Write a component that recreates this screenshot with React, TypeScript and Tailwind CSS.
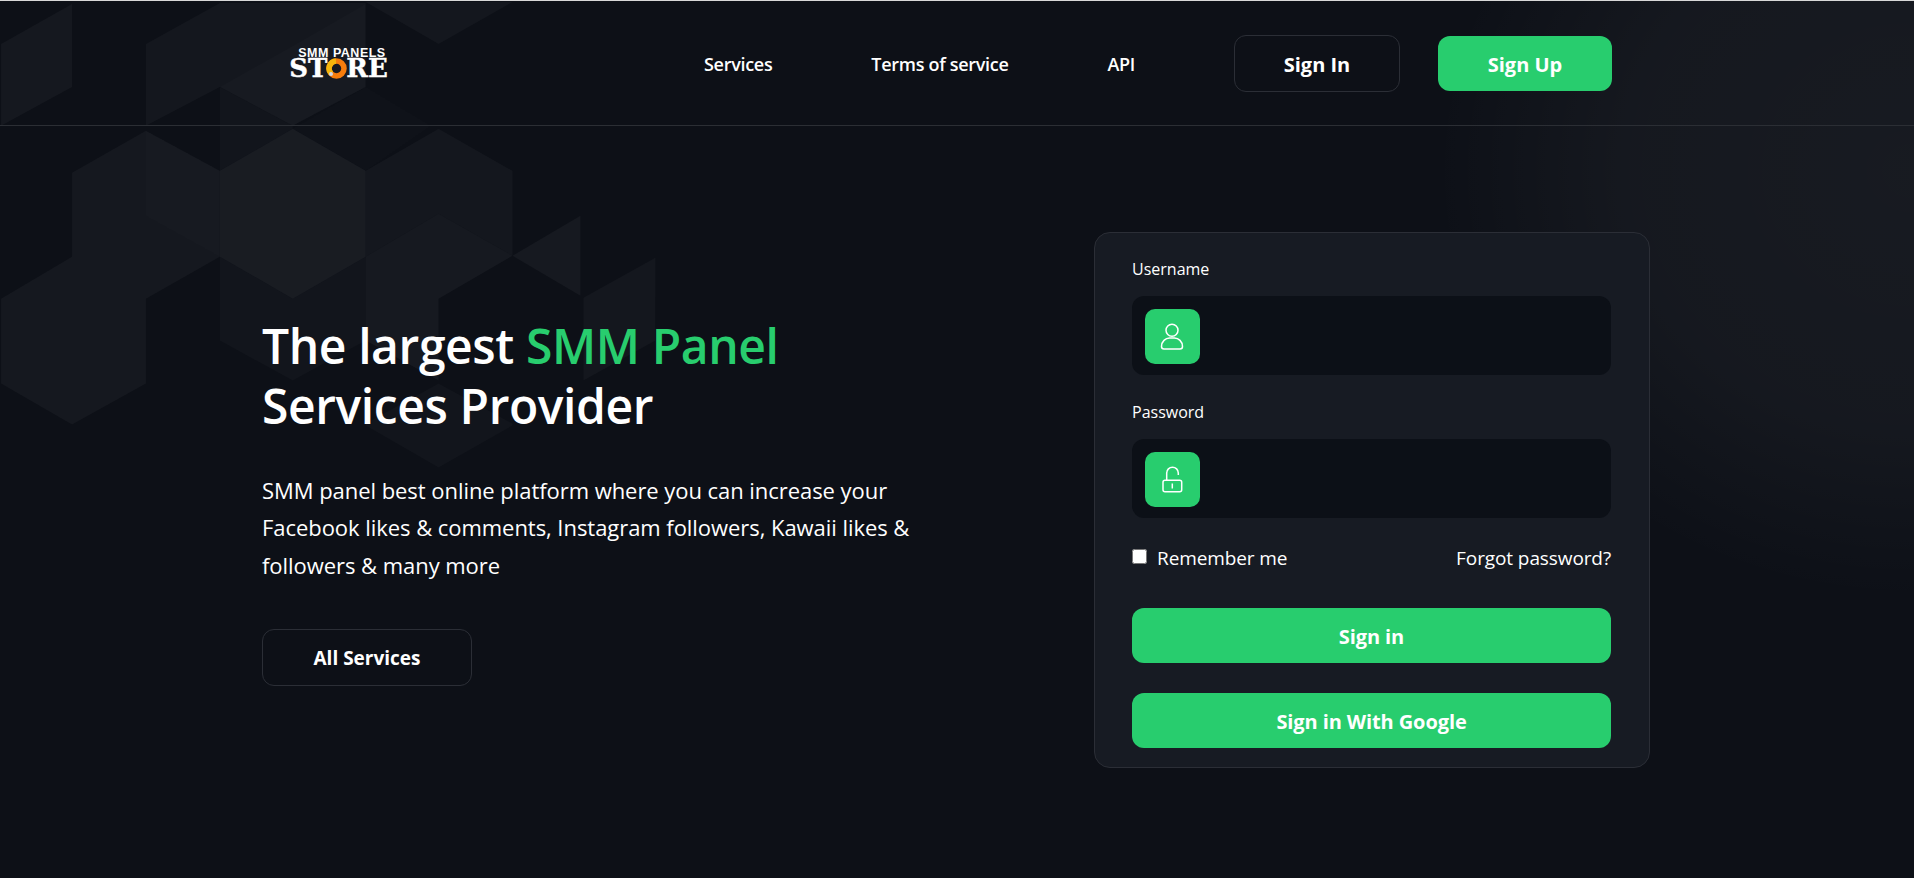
import { useState } from "react";

const shapes: { points: string; opacity: number }[] = [
  { points: "0,43 71,3 71,86 0,125", opacity: 0.035 },
  { points: "145,43 219,2 365,2 365,86 292,125 219,86 145,125", opacity: 0.03 },
  { points: "219,86 292,45 365,3 365,86 292,125", opacity: 0.015 },
  { points: "365,1 438,43 512,1", opacity: 0.03 },
  { points: "219,86 292,125 292,128 219,170", opacity: 0.025 },
  { points: "292,128 365,86 430,125 365,170", opacity: 0.012 },
  { points: "219,170 292,128 365,170 365,256 292,298 219,256", opacity: 0.05 },
  { points: "71,172 145,130 219,170 219,256 145,298 145,383 71,424 0,383 0,298 71,256", opacity: 0.035 },
  { points: "145,130 219,170 219,256 145,215", opacity: 0.012 },
  { points: "365,170 438,128 512,170 512,255 438,213 365,256", opacity: 0.03 },
  { points: "365,256 438,213 512,255 438,298 438,380 365,340", opacity: 0.04 },
  { points: "512,255 580,215 580,295", opacity: 0.04 },
  { points: "583,297 655,257 655,340 583,380", opacity: 0.03 },
  { points: "219,256 292,298 365,256 365,340 292,380 219,340", opacity: 0.025 },
  { points: "365,423 438,383 512,423 512,425 438,467 365,425", opacity: 0.025 },
];

function Backdrop() {
  return (
    <svg className="absolute inset-0 w-full h-full pointer-events-none" viewBox="0 0 1914 878" fill="none">
      <defs>
        <radialGradient id="glow">
          <stop offset="0" stopColor="#ffffff" stopOpacity="0.045" />
          <stop offset="0.6" stopColor="#ffffff" stopOpacity="0.035" />
          <stop offset="1" stopColor="#ffffff" stopOpacity="0" />
        </radialGradient>
      </defs>
      {shapes.map((s, i) => (
        <polygon key={i} points={s.points} fill="#ffffff" fillOpacity={s.opacity} />
      ))}
      {/* faint glow on the right */}
      <ellipse cx="1914" cy="170" rx="480" ry="430" fill="url(#glow)" />
    </svg>
  );
}

function Logo() {
  return (
    <div className="flex flex-col items-center w-[99px] text-white select-none">
      <span className="font-['Liberation_Sans',sans-serif] font-bold text-[12.5px] leading-[10px] tracking-[0.5px] ml-[7px] whitespace-nowrap">
        SMM PANELS
      </span>
      <span className="flex items-center font-['DejaVu_Serif',serif] font-bold text-[26px] leading-[21px] [-webkit-text-stroke:0.4px_white]">
        ST
        <svg width="23" height="23" viewBox="0 0 23 23" className="-mx-[2px] -my-1 shrink-0">
          <circle cx="11.5" cy="11.5" r="7.5" fill="none" stroke="#f57c0c" strokeWidth="5.5" />
          <path d="M6 16.5a7.5 7.5 0 0 1 5-12.5" fill="none" stroke="#f5b50c" strokeWidth="5.5" />
          <circle cx="6" cy="17" r="2" fill="#cfd8e6" />
        </svg>
        RE
      </span>
    </div>
  );
}

function UserGlyph() {
  return (
    <svg width="55" height="55" viewBox="0 0 55 55" fill="none" stroke="#ffffff" strokeWidth="1.5">
      <circle cx="27" cy="21.3" r="6" />
      <path d="M19 40h16a2.5 2.5 0 0 0 2.5-2.5c0-5-4-8.5-8-8.5h-5c-4 0-8 3.5-8 8.5a2.5 2.5 0 0 0 2.5 2.5z" />
    </svg>
  );
}

function LockGlyph() {
  return (
    <svg width="55" height="55" viewBox="0 0 55 55" fill="none" stroke="#ffffff" strokeWidth="1.5">
      <rect x="18" y="28.3" width="18.7" height="11.4" rx="2" />
      <path d="M21.7 28.3V21a5.8 5.8 0 0 1 11.6 0v2" />
      <path d="M27.3 31.5v5" />
    </svg>
  );
}

function Field({
  label,
  type,
  icon,
  value,
  onChange,
}: {
  label: string;
  type: string;
  icon: React.ReactNode;
  value: string;
  onChange: (v: string) => void;
}) {
  return (
    <div>
      <label className="block text-[16px] leading-[24px] text-white mb-[15px]">{label}</label>
      <div className="flex items-start h-[79px] bg-[#0c1017] rounded-[12px] pl-[13px] pt-[13px]">
        <span className="shrink-0 w-[55px] h-[55px] rounded-[10px] bg-[#28cd6e]">{icon}</span>
        <input
          type={type}
          value={value}
          onChange={(e) => onChange(e.target.value)}
          className="flex-1 min-w-0 h-[55px] bg-transparent px-4 text-white outline-none"
        />
      </div>
    </div>
  );
}

export default function App() {
  const [username, setUsername] = useState("");
  const [password, setPassword] = useState("");

  return (
    <div className="relative min-h-screen overflow-hidden bg-[#0d1017] border-t border-[#d8d8d8] font-['Open_Sans',sans-serif] text-white">
      <Backdrop />

      {/* Header */}
      <header className="relative flex items-center h-[125px] border-b border-[#2b2e34] pl-[289px] pr-[302px]">
        <Logo />
        <nav className="flex items-center gap-[99px] ml-[316px] pt-[2px] text-[18px] font-semibold tracking-[-0.3px]">
          <a href="#">Services</a>
          <a href="#">Terms of service</a>
          <a href="#">API</a>
        </nav>
        <div className="flex items-center gap-[38px] ml-auto text-[20px] font-bold">
          <a href="#" className="flex items-center justify-center w-[166px] h-[57px] rounded-[12px] border border-[#2b2e36] pt-[3px]">
            Sign In
          </a>
          <a href="#" className="flex items-center justify-center w-[174px] h-[55px] rounded-[12px] bg-[#28cd6e] pt-[3px]">
            Sign Up
          </a>
        </div>
      </header>

      {/* Hero + login */}
      <main className="relative flex justify-between pl-[262px] pr-[264px] pt-[106px]">
        <section className="w-[700px] pt-[84px]">
          <h1 className="text-[48px] leading-[60px] font-semibold tracking-[-0.4px]">
            The largest <span className="text-[#28cd6e]">SMM Panel</span>
            <br />
            Services Provider
          </h1>
          <p className="mt-[36px] text-[22px] leading-[37.4px] tracking-[-0.05px]">
            SMM panel best online platform where you can increase your
            <br />
            Facebook likes &amp; comments, Instagram followers, Kawaii likes &amp;
            <br />
            followers &amp; many more
          </p>
          <a
            href="#"
            className="mt-[45px] flex items-center justify-center w-[210px] h-[57px] rounded-[12px] border border-[#2b2e36] pt-[2px] text-[19px] font-bold"
          >
            All Services
          </a>
        </section>

        <form className="w-[556px] h-[536px] bg-[#171b23] border border-[#2b2e36] rounded-[16px] pl-[37px] pr-[38px] pt-[24px]">
          <Field label="Username" type="text" icon={<UserGlyph />} value={username} onChange={setUsername} />
          <div className="mt-[25px]">
            <Field label="Password" type="password" icon={<LockGlyph />} value={password} onChange={setPassword} />
          </div>
          <div className="flex items-center justify-between mt-[26px] h-[28px] text-[19px] tracking-[-0.1px]">
            <label className="flex items-center gap-[10px]">
              <input type="checkbox" className="w-[15px] h-[15px] -mt-[3px]" />
              Remember me
            </label>
            <a href="#">Forgot password?</a>
          </div>
          <button type="button" className="block w-full h-[55px] mt-[36px] pt-[2px] rounded-[12px] bg-[#28cd6e] text-[20px] font-bold tracking-[-0.1px]">
            Sign in
          </button>
          <button type="button" className="block w-full h-[55px] mt-[30px] pt-[2px] rounded-[12px] bg-[#28cd6e] text-[20px] font-bold tracking-[-0.1px]">
            Sign in With Google
          </button>
        </form>
      </main>
    </div>
  );
}
